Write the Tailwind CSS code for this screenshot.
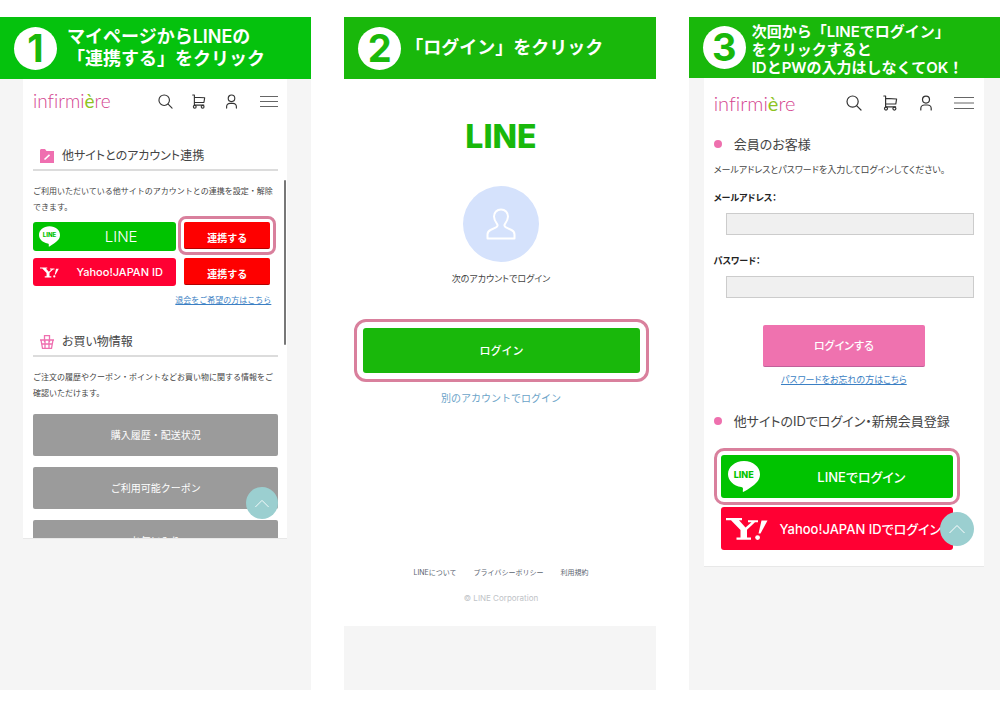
<!DOCTYPE html>
<html lang="ja">
<head>
    <meta charset="UTF-8">
    <meta name="viewport" content="width=device-width, initial-scale=1.0">
    <title>LINE連携・ログイン手順</title>
    <script src="https://cdn.jsdelivr.net/npm/@tailwindcss/browser@4"></script>
</head>
<body class="bg-white font-['Inter','Noto_Sans_CJK_JP',sans-serif] text-[#444]">
    <!-- shared icons -->
    <svg class="hidden" aria-hidden="true">
        <symbol id="icon-search" viewBox="0 0 16 16" fill="none" stroke="currentColor" stroke-width="1.2" stroke-linecap="round">
            <circle cx="6.6" cy="6.6" r="5.6"/>
            <path d="M10.8 10.8 15 15"/>
        </symbol>
        <symbol id="icon-cart" viewBox="0 0 16 16" fill="none" stroke="currentColor" stroke-width="1.2" stroke-linecap="round" stroke-linejoin="round">
            <path d="M1.8 1H3.6V11.8M3.6 3.4L14.6 4L13.8 9H3.600M3.6 11.8H13.6"/>
            <circle cx="4" cy="13.6" r="1.5"/>
            <circle cx="12.4" cy="13.6" r="1.5"/>
        </symbol>
        <symbol id="icon-user" viewBox="0 0 16 16" fill="none" stroke="currentColor" stroke-width="1.2" stroke-linecap="round">
            <circle cx="8" cy="4.6" r="3.5"/>
            <path d="M2.8 15V13.4C2.8 11.4 4.6 10 6.4 10H9.6C11.4 10 13.2 11.4 13.2 13.4V15"/>
        </symbol>
        <symbol id="icon-menu" viewBox="0 0 20 14" fill="none" stroke="currentColor" stroke-width="1.2">
            <path d="M0 1.5H20M0 7H20M0 12.5H20"/>
        </symbol>
        <symbol id="icon-up" viewBox="0 0 18 10" fill="none" stroke="currentColor" stroke-width="1">
            <path d="M1.5 9 9 1.5 16.5 9"/>
        </symbol>
        <symbol id="icon-bubble" viewBox="0 0 32 31" fill="currentColor">
            <path d="M16 0C7 0 0 6 0 13.2C0 19.6 5.6 24.8 13.2 26C15.6 26.5 15 28 14.8 30.4C14.8 31 15.4 31 16 30.6C20 28.4 26 24.6 29 21C31 18.8 32 16 32 13.2C32 6 25 0 16 0Z"/>
        </symbol>
        <symbol id="icon-yahoo" viewBox="0 0 42 24" fill="currentColor">
            <path d="M0 1H16V3.2H13L19.5 10.5L25.5 5.200H22V3.200H32V5.200H29L21 12.800V20.500H25V22.800H10.500V20.500H14.500V13L5 3.200H0Z"/>
            <path d="M35.500 3.500H41.500L34.500 16.500H32.500Z"/>
            <circle cx="31.600" cy="20.600" r="2.400"/>
        </symbol>
    </svg>

    <main class="grid grid-cols-3 gap-[33px] pt-[17px] pb-[18px]">
        <!-- step 1 -->
        <section class="flex flex-col bg-[#f5f5f5]">
            <header class="flex h-[62px] items-center gap-[10px] bg-[#05c20d] pl-[14px] text-white">
                <span class="flex size-[43px] shrink-0 items-center justify-center rounded-full bg-white text-[38px]/[43px] font-bold text-[#19b80b]">1</span>
                <h2 class="text-[18px]/[22px] font-semibold whitespace-nowrap">マイページからLINEの<br>「連携する」をクリック</h2>
            </header>

            <div class="relative mr-6 ml-[23px] h-[460px] overflow-hidden border-b border-[#e8e8e8] bg-white pr-[9px] pl-[10px]">
                <div class="flex h-11 items-center text-[#333]">
                    <a href="#" class="mr-auto font-['Lato',sans-serif] text-[19px]/[24px] font-light text-[#d4458f] [font-variant-ligatures:none]">infirmi<span class="font-normal text-[#8fc31f]">è</span>re</a>
                    <div class="flex items-center gap-[18px]">
                        <button aria-label="検索"><svg class="block size-[15px]"><use href="#icon-search"/></svg></button>
                        <button aria-label="カート"><svg class="block size-[15px]"><use href="#icon-cart"/></svg></button>
                        <button aria-label="マイページ"><svg class="block size-[15px]"><use href="#icon-user"/></svg></button>
                        <button aria-label="メニュー" class="pl-[3px] text-[#666]"><svg class="block h-[13px] w-[18px]"><use href="#icon-menu"/></svg></button>
                    </div>
                </div>

                <div class="mt-5 flex h-7 items-center gap-2 border-b-2 border-[#dcdcdc] pl-[7px]">
                    <svg class="size-[14px]" viewBox="0 0 14 14">
                        <path d="M0 1.500C0 .6.6 0 1.500 0H5L6.500 2H14V14H0Z" fill="#ef6fb0"/>
                        <path d="M4.500 10.500 9.500 5.800" stroke="#fff" stroke-width="1.600"/>
                    </svg>
                    <h3 class="text-[12px]/[16px] [font-feature-settings:'palt']">他サイトとのアカウント連携</h3>
                </div>
                <p class="mt-3 text-[8px]/[16px]">ご利用いただいている他サイトのアカウントとの連携を設定・解除できます。</p>

                <div class="mt-[7px] grid grid-cols-[1fr_86px] gap-x-2 gap-y-[7px] pr-2">
                    <button class="flex h-[29px] items-center rounded-[3px] bg-[#00c300] pl-[6px] text-white">
                        <span class="relative flex h-[21px] w-[21px] shrink-0 justify-center">
                            <svg class="absolute inset-0 h-full w-full"><use href="#icon-bubble"/></svg>
                            <span class="relative text-[6px]/[18px] font-extrabold text-[#00c300]">LINE</span>
                        </span>
                        <span class="flex-1 pl-[6px] text-center text-[15px]/[20px] font-light">LINE</span>
                    </button>
                    <button class="h-[27px] rounded-[2px] border-b border-[#b30000] bg-[#fe0000] pt-[6px] text-[10px]/[20px] font-bold text-white outline-3 outline-offset-3 outline-[#d9809d]">連携する</button>
                    <button class="flex h-[28px] items-center rounded-[3px] bg-[#ff0033] pl-[7px] text-white">
                        <svg class="h-[11px] w-[19px] shrink-0"><use href="#icon-yahoo"/></svg>
                        <span class="flex-1 pl-1 text-center text-[11px]/[16px] font-medium">Yahoo!JAPAN ID</span>
                    </button>
                    <button class="h-[27px] rounded-[2px] border-b border-[#b30000] bg-[#fe0000] pt-[6px] text-[10px]/[20px] font-bold text-white">連携する</button>
                </div>
                <p class="mt-2 pr-[7px] text-right text-[8px]/[12px]"><a href="#" class="text-[#3b7fc4] underline">退会をご希望の方はこちら</a></p>

                <div class="mt-[23px] flex h-7 items-center gap-2 border-b-2 border-[#dcdcdc] pl-[7px]">
                    <svg class="size-[14px]" viewBox="0 0 14 14" fill="none" stroke="#ef6fb0" stroke-width="1.300">
                        <path d="M0 5H14M1 5 2.500 13.300H11.500L13 5M4.500 7V.7H9.500V7M1.500 9H12.500M5 5V13M9 5V13"/>
                    </svg>
                    <h3 class="text-[12px]/[16px] [font-feature-settings:'palt']">お買い物情報</h3>
                </div>
                <p class="mt-3 text-[8px]/[16px]">ご注文の履歴やクーポン・ポイントなどお買い物に関する情報をご確認いただけます。</p>
                <div class="mt-[13px] flex flex-col gap-[11px] text-[10px]/[16px] text-white">
                    <button class="h-[42px] rounded-[2px] bg-[#9b9b9b]">購入履歴・配送状況</button>
                    <button class="h-[42px] rounded-[2px] bg-[#9b9b9b]">ご利用可能クーポン</button>
                    <button class="h-[42px] rounded-[2px] bg-[#9b9b9b]">お気に入り</button>
                </div>

                <!-- scroll thumb -->
                <div class="absolute top-[101px] right-px h-[165px] w-[2px] rounded-full bg-[#777]"></div>
                <button aria-label="ページ上部へ" class="absolute right-[9px] bottom-[19px] flex size-8 items-center justify-center rounded-full bg-[#9bcfd0] text-white">
                    <svg class="h-[9px] w-4"><use href="#icon-up"/></svg>
                </button>
            </div>
        </section>

        <!-- step 2 -->
        <section class="flex flex-col bg-[#f5f5f5]">
            <header class="flex h-[62px] items-center gap-1 bg-[#19b80b] pl-[14px] text-white">
                <span class="flex size-[43px] shrink-0 items-center justify-center rounded-full bg-white text-[38px]/[43px] font-bold text-[#19b80b]">2</span>
                <h2 class="text-[18px]/[22px] font-semibold whitespace-nowrap">「ログイン」をクリック</h2>
            </header>

            <div class="mb-16 flex flex-1 flex-col items-center bg-white pt-[42px] pl-[2px]">
                <p class="text-[32px]/[32px] font-extrabold text-[#19b80b]">LINE</p>
                <div class="mt-[33px] flex size-[76px] items-center justify-center rounded-full bg-[#d5e2fc]">
                    <svg class="h-8 w-[30px]" viewBox="0 0 30 32" fill="none" stroke="#fff" stroke-width="2" stroke-linejoin="round">
                        <path d="M15 1.500C10.800 1.500 8 4.600 8 8.600C8 11.800 9.400 13.800 11 15.800C12 17.200 11.600 18.600 10 19.400L4.500 22C2.400 23 1.500 24.500 1.500 26.500V30.500H28.500V26.500C28.500 24.500 27.600 23 25.500 22L20 19.400C18.400 18.600 18 17.200 19 15.800C20.600 13.800 22 11.800 22 8.600C22 4.600 19.200 1.500 15 1.500Z"/>
                    </svg>
                </div>
                <p class="mt-[9px] text-[9px]/[16px] [font-feature-settings:'palt']">次のアカウントでログイン</p>
                <div class="mt-[41px] w-full pr-4 pl-[17px]">
                    <button class="h-[45px] w-full rounded-[3px] bg-[#19b80b] text-[11px]/[16px] font-medium text-white outline-3 outline-offset-6 outline-[#d9809d]">ログイン</button>
                </div>
                <a href="#" class="mt-[17px] text-[10px]/[16px] text-[#6ba3c8]">別のアカウントでログイン</a>
                <nav class="mt-auto flex gap-[17px] text-[7px]/[12px] text-[#5b6470]">
                    <a href="#">LINEについて</a>
                    <a href="#">プライバシーポリシー</a>
                    <a href="#">利用規約</a>
                </nav>
                <p class="mt-[13px] mb-[22px] text-[8px]/[12px] text-[#c0c3c7]">© LINE Corporation</p>
            </div>
        </section>

        <!-- step 3 -->
        <section class="flex min-h-[673px] flex-col bg-[#f5f5f5]">
            <header class="flex h-[61px] items-center gap-[6px] bg-[#19b80b] pl-[14px] text-white">
                <span class="flex size-[43px] shrink-0 items-center justify-center rounded-full bg-white text-[38px]/[43px] font-bold text-[#19b80b]">3</span>
                <h2 class="pt-[4px] text-[15px]/[18px] font-semibold whitespace-nowrap">次回から「LINEでログイン」<br>をクリックすると<br>IDとPWの入力はしなくてOK！</h2>
            </header>

            <div class="relative mr-4 ml-[15px] border-b border-[#e8e8e8] bg-white px-[10px] pb-4">
                <div class="flex h-[50px] items-center text-[#333]">
                    <a href="#" class="mr-auto font-['Lato',sans-serif] text-[20px]/[24px] font-light text-[#d4458f] [font-variant-ligatures:none]">infirmi<span class="font-normal text-[#8fc31f]">è</span>re</a>
                    <div class="flex items-center gap-5">
                        <button aria-label="検索"><svg class="block size-4"><use href="#icon-search"/></svg></button>
                        <button aria-label="カート"><svg class="block size-4"><use href="#icon-cart"/></svg></button>
                        <button aria-label="マイページ"><svg class="block size-4"><use href="#icon-user"/></svg></button>
                        <button aria-label="メニュー" class="text-[#666]"><svg class="block h-[14px] w-5"><use href="#icon-menu"/></svg></button>
                    </div>
                </div>

                <h3 class="mt-1 flex h-6 items-center gap-3 text-[13px]/[24px] whitespace-nowrap [font-feature-settings:'palt']">
                    <span class="size-2 rounded-full bg-[#ee70ae]"></span>会員のお客様
                </h3>
                <form>
                    <p class="mt-[6px] text-[9px]/[16px] whitespace-nowrap [font-feature-settings:'palt']">メールアドレスとパスワードを入力してログインしてください。</p>
                    <label for="email" class="mt-3 block text-[9px]/[16px] font-bold text-[#222] [font-feature-settings:'palt']">メールアドレス：</label>
                    <div class="mt-[7px] pl-3"><input id="email" type="email" class="block h-[22px] w-full border border-[#ccc] bg-[#f0f0f0] px-2 text-[10px]"></div>
                    <label for="password" class="mt-[18px] block text-[9px]/[16px] font-bold text-[#222] [font-feature-settings:'palt']">パスワード：</label>
                    <div class="mt-[7px] pl-3"><input id="password" type="password" class="block h-[22px] w-full border border-[#ccc] bg-[#f0f0f0] px-2 text-[10px]"></div>
                    <button type="button" class="mx-auto mt-[27px] block h-[42px] w-[162px] rounded-[2px] border-b border-[#c0609a] bg-[#ef72af] text-[11px]/[16px] font-medium text-white [font-feature-settings:'palt']">ログインする</button>
                </form>
                <p class="mt-[5px] text-center text-[9px]/[16px] [font-feature-settings:'palt']"><a href="#" class="text-[#3b7fc4] underline">パスワードをお忘れの方はこちら</a></p>

                <h3 class="mt-[21px] flex h-6 items-center gap-3 text-[13px]/[24px] whitespace-nowrap [font-feature-settings:'palt']">
                    <span class="size-2 rounded-full bg-[#ee70ae]"></span>他サイトのIDでログイン・新規会員登録
                </h3>
                <div class="mt-[22px] flex flex-col gap-[9px] pr-[21px] pl-[7px] text-[13px]/[20px] font-medium text-white [font-feature-settings:'palt']">
                    <button class="flex h-[43px] items-center rounded-[3px] bg-[#00c300] pl-[7px] outline-3 outline-offset-4 outline-[#d9809d]">
                        <span class="relative flex h-[31px] w-8 shrink-0 justify-center">
                            <svg class="absolute inset-0 h-full w-full"><use href="#icon-bubble"/></svg>
                            <span class="relative text-[9px]/[27px] font-extrabold text-[#00c300]">LINE</span>
                        </span>
                        <span class="flex-1 pl-[10px] text-center">LINEでログイン</span>
                    </button>
                    <button class="flex h-[43px] items-center rounded-[3px] bg-[#ff0033] pl-[5px]">
                        <svg class="h-6 w-[42px] shrink-0"><use href="#icon-yahoo"/></svg>
                        <span class="flex-1 text-center whitespace-nowrap">Yahoo!JAPAN IDでログイン</span>
                    </button>
                </div>

                <button aria-label="ページ上部へ" class="absolute right-[10px] bottom-[20px] flex size-[34px] items-center justify-center rounded-full bg-[#9bcfd0] text-white">
                    <svg class="h-[10px] w-[18px]"><use href="#icon-up"/></svg>
                </button>
            </div>
        </section>
    </main>
</body>
</html>
